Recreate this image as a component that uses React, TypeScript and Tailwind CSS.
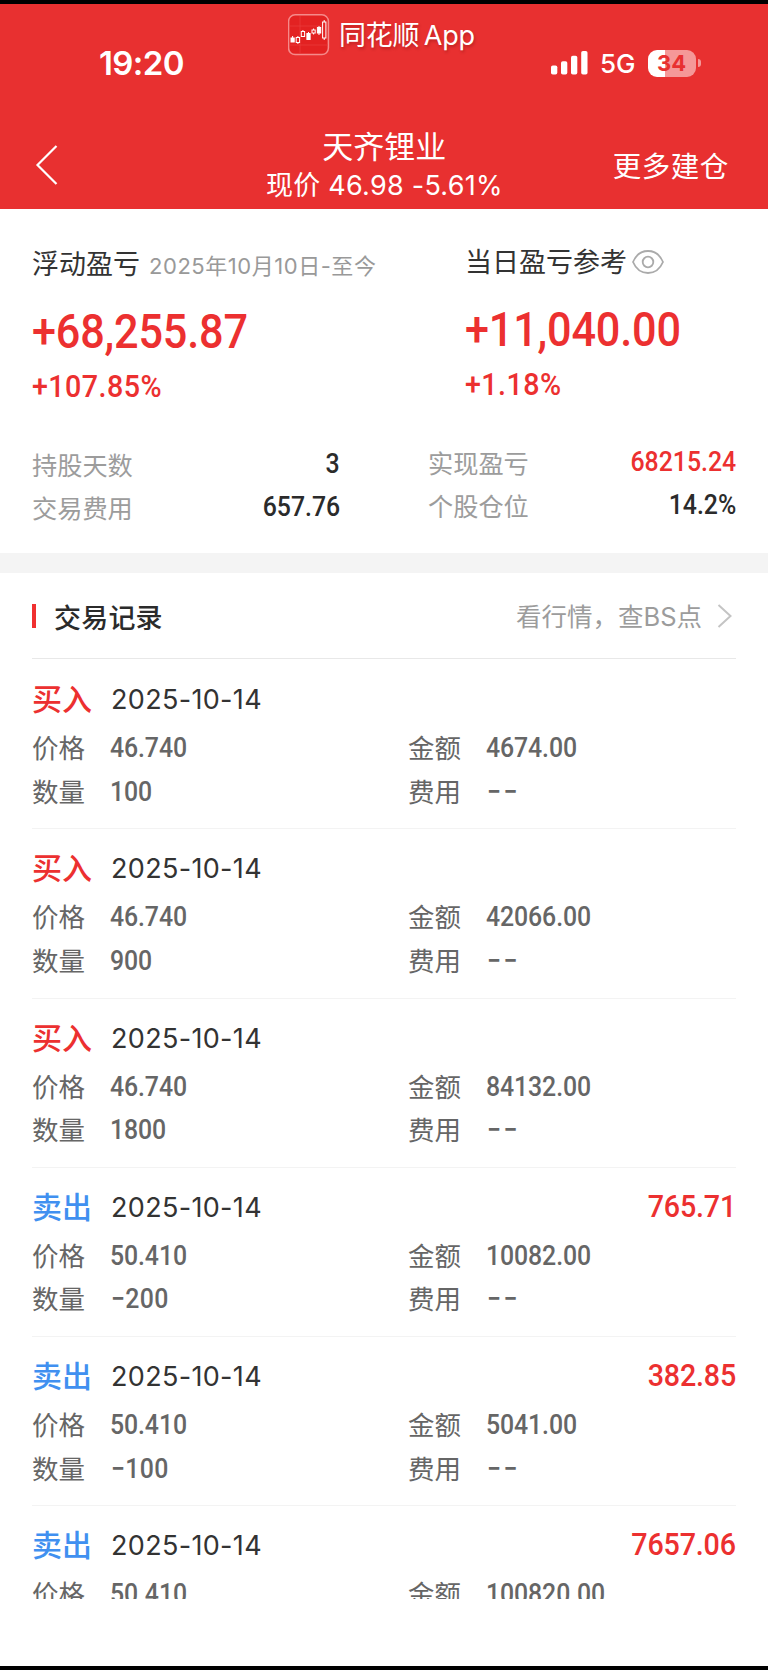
import type { ReactNode } from "react";

type Trade = {
  side: "买入" | "卖出";
  price: string;
  quantity: string;
  amount: string;
  profit?: string;
};

const trades: Trade[] = [
  { side: "买入", price: "46.740", quantity: "100", amount: "4674.00" },
  { side: "买入", price: "46.740", quantity: "900", amount: "42066.00" },
  { side: "买入", price: "46.740", quantity: "1800", amount: "84132.00" },
  { side: "卖出", price: "50.410", quantity: "−200", amount: "10082.00", profit: "765.71" },
  { side: "卖出", price: "50.410", quantity: "−100", amount: "5041.00", profit: "382.85" },
  { side: "卖出", price: "50.410", quantity: "−2000", amount: "100820.00", profit: "7657.06" },
];

function Num({ children, className = "", end = false }: { children: ReactNode; className?: string; end?: boolean }) {
  return (
    <span
      className={`block scale-x-[0.91] whitespace-nowrap font-['Roboto','Noto_Sans_CJK_SC',sans-serif] font-medium ${
        end ? "origin-right" : "origin-left"
      } ${className}`}
    >
      {children}
    </span>
  );
}

function AppLogo() {
  return (
    <svg className="h-[42px] w-[42px]" viewBox="0 0 42 42" fill="none">
      <rect x="0.6" y="0.8" width="39.8" height="39.8" rx="6.5" fill="#e32222" stroke="#f58a8a" strokeWidth="1.5" />
      <path d="M12 2v38M2 31h38M2 12h38" stroke="#ea3d3d" strokeWidth="0.7" />
      <g stroke="#fff" strokeWidth="1">
        <path d="M4.600 22v6M9.900 22v8M14.900 16v7M20.500 18v8M25.600 14.500v6M31 12v9M36.200 6v20" />
        <rect x="3" y="24" width="3.200" height="4" fill="#fff" />
        <rect x="8.200" y="23.500" width="3.400" height="5" fill="#e32222" />
        <rect x="13.300" y="17.500" width="3.300" height="5" fill="#e32222" />
        <rect x="18.900" y="19.500" width="3.200" height="6" fill="#fff" />
        <rect x="24" y="16" width="3.200" height="3" fill="#e32222" />
        <rect x="29.400" y="13.500" width="3.300" height="5.500" fill="#fff" />
        <rect x="34.600" y="8" width="3.300" height="16" fill="#e32222" />
      </g>
    </svg>
  );
}

function SignalBars() {
  return (
    <svg className="h-[24px] w-[38px]" viewBox="0 0 38 24" fill="#fff">
      <rect x="0" y="14.500" width="6.300" height="9" rx="1.800" />
      <rect x="10" y="10.200" width="6.300" height="13.300" rx="1.800" />
      <rect x="20" y="4.800" width="6.300" height="18.700" rx="1.800" />
      <rect x="30.200" y="0" width="6.300" height="23.500" rx="1.800" />
    </svg>
  );
}

function Header() {
  return (
    <header className="h-[209px] border-t-4 border-black bg-[#e83030] text-white">
      <div className="flex h-[96px]">
        <div className="w-[288px] pt-[39px] pl-[99px] text-[33px] leading-[40px] font-semibold tracking-[-0.6px]">19:20</div>
        <div className="flex w-[263px] pt-[10px]">
          <AppLogo />
          <span className="pt-[2px] pl-[9px] text-[27px] leading-[40px] tracking-[-0.2px] [text-shadow:1px_2px_3px_rgba(90,0,0,0.3)] [word-spacing:-3px]">
            同花顺 App
          </span>
        </div>
        <div className="mt-[45px] flex h-[28px] items-center">
          <SignalBars />
          <span className="w-[59px] pt-[1px] pl-[11px] text-[26px] leading-[28px] font-medium">5G</span>
          <span className="flex h-[27px] w-[48px] items-center justify-center rounded-[9px] bg-linear-to-r from-white from-[17px] to-[#f59898] to-[17px] pr-[1px] text-[22px] leading-[27px] font-bold text-[#e83030]">
            34
          </span>
          <span className="ml-[1.500px] h-[8px] w-[3px] rounded-r-full bg-[#f59898]" />
        </div>
      </div>
      <div className="grid grid-cols-[266px_1fr_266px]">
        <svg className="mt-[44px] ml-[35px] h-[42px] w-[24px]" viewBox="0 0 24 42" fill="none" stroke="#fff" strokeWidth="2.200">
          <path d="M21.500 2 2.500 21l19 19" />
        </svg>
        <div className="pt-[27px] text-center whitespace-nowrap">
          <h1 className="text-[31px] leading-[40px] font-normal">天齐锂业</h1>
          <p className="text-[27px] leading-[38px] tracking-[0.25px]">现价 46.98 -5.61%</p>
        </div>
        <div className="pt-[47px] pl-[110px] text-[28.500px] leading-[40px] tracking-[0.500px]">更多建仓</div>
      </div>
    </header>
  );
}

function Stat({ label, value, red = false }: { label: string; value: string; red?: boolean }) {
  return (
    <div className="flex h-[43.300px] justify-between leading-[40px]">
      <span className="pt-[2.500px] text-[25.200px] text-[#9c9c9c]">{label}</span>
      <Num end className={`pt-[0.500px] text-[27.300px] ${red ? "text-[#ec3030]" : "text-[#2b2b2b]"}`}>
        {value}
      </Num>
    </div>
  );
}

function Summary() {
  return (
    <section className="h-[344px] text-[#333]">
      <div className="flex h-[234px]">
        <div className="w-[465px] shrink-0 pt-[35.500px] pl-[32px]">
          <div className="flex h-[43px] leading-[40px]">
            <h2 className="text-[27px] font-normal">浮动盈亏</h2>
            <span className="pt-[1px] pl-[9px] text-[22px] tracking-[0.540px] whitespace-nowrap text-[#999]">2025年10月10日-至今</span>
          </div>
          <div className="mt-[14px] leading-[60px] text-[#ec3030]">
            <Num className="text-[47.500px] tracking-[-0.200px]">+68,255.87</Num>
          </div>
          <div className="mt-[5px] leading-[40px] text-[#ec3030]">
            <Num className="text-[31.500px] tracking-[0.500px]">+107.85%</Num>
          </div>
        </div>
        <div className="pt-[34px]">
          <div className="flex leading-[40px]">
            <h2 className="text-[27px] font-normal whitespace-nowrap">当日盈亏参考</h2>
            <svg className="mt-[6px] ml-[5px] h-[26px] w-[32px]" viewBox="0 0 32 26" fill="none" stroke="#aaa" strokeWidth="1.800">
              <path d="M1 13C4 6 9.500 2 16 2s12 4 15 11c-3 7-8.500 11-15 11S4 20 1 13Z" />
              <circle cx="16" cy="13" r="5.300" />
            </svg>
          </div>
          <div className="mt-[17px] leading-[60px] text-[#ec3030]">
            <Num className="text-[47.500px] tracking-[-0.200px]">+11,040.00</Num>
          </div>
          <div className="mt-[5px] leading-[40px] text-[#ec3030]">
            <Num className="text-[31.500px] tracking-[0.500px]">+1.18%</Num>
          </div>
        </div>
      </div>
      <div className="grid grid-cols-[308px_308px] justify-between px-[32px]">
        <div>
          <Stat label="持股天数" value="3" />
          <Stat label="交易费用" value="657.76" />
        </div>
        <div className="mt-[-2px]">
          <Stat label="实现盈亏" value="68215.24" red />
          <Stat label="个股仓位" value="14.2%" />
        </div>
      </div>
    </section>
  );
}

function Field({ label, value }: { label: string; value: string }) {
  return (
    <div className="flex h-[43.500px] leading-[40px] text-[#666]">
      <span className="w-[78px] text-[26.500px]">{label}</span>
      <Num
        className={`text-[27.300px] ${
          value === "−−" ? "pl-[1px] tracking-[3px]" : value.startsWith("−") ? "pl-[1px] tracking-[0.400px]" : "tracking-[-0.100px]"
        }`}
      >
        {value}
      </Num>
    </div>
  );
}

function TradeRow({ trade }: { trade: Trade }) {
  const buy = trade.side === "买入";
  return (
    <article className="mx-[32px] h-[169.300px] shrink-0 border-b border-[#f3f3f3] pt-[19px]">
      <div className="flex h-[49px] leading-[40px]">
        <span className={`w-[79px] text-[30px] font-medium ${buy ? "text-[#ec3030]" : "text-[#4090f0]"}`}>{trade.side}</span>
        <time className="pt-[1px] text-[27px] tracking-[0.330px] text-[#333]">2025-10-14</time>
        {trade.profit && (
          <Num end className="ml-auto text-[31.500px] tracking-[-0.200px] text-[#ec3030]">
            {trade.profit}
          </Num>
        )}
      </div>
      <div className="grid grid-cols-[376px_1fr]">
        <Field label="价格" value={trade.price} />
        <Field label="金额" value={trade.amount} />
        <Field label="数量" value={trade.quantity} />
        <Field label="费用" value="−−" />
      </div>
    </article>
  );
}

export default function App() {
  return (
    <main className="flex h-[1670px] w-[768px] flex-col overflow-hidden border-b-4 border-black bg-white font-['Inter','Noto_Sans_CJK_SC',sans-serif]">
      <Header />
      <Summary />
      <div className="h-[20px] bg-[#f4f4f4]" />
      <section className="flex h-[1026px] flex-col overflow-hidden">
        <div className="mx-[32px] mb-[1px] flex h-[86px] shrink-0 items-center border-b border-[#e8e8e8] pb-[1px]">
          <span className="mt-[2px] h-[24px] w-[4px] bg-[#f03030]" />
          <h2 className="mt-[7px] pl-[18px] text-[27px] leading-[40px] font-medium tracking-[0.200px] text-[#2b2b2b]">交易记录</h2>
          <span className="mt-[4px] ml-auto text-[25.500px] leading-[40px] text-[#9c9c9c]">看行情，查BS点</span>
          <svg className="mt-[2px] mr-[4px] ml-[15px] h-[24px] w-[15px]" viewBox="0 0 15 24" fill="none" stroke="#c4c4c4" strokeWidth="2">
            <path d="m1.500 1 12 11-12 11" />
          </svg>
        </div>
        {trades.map((trade, index) => (
          <TradeRow key={index} trade={trade} />
        ))}
      </section>
    </main>
  );
}
